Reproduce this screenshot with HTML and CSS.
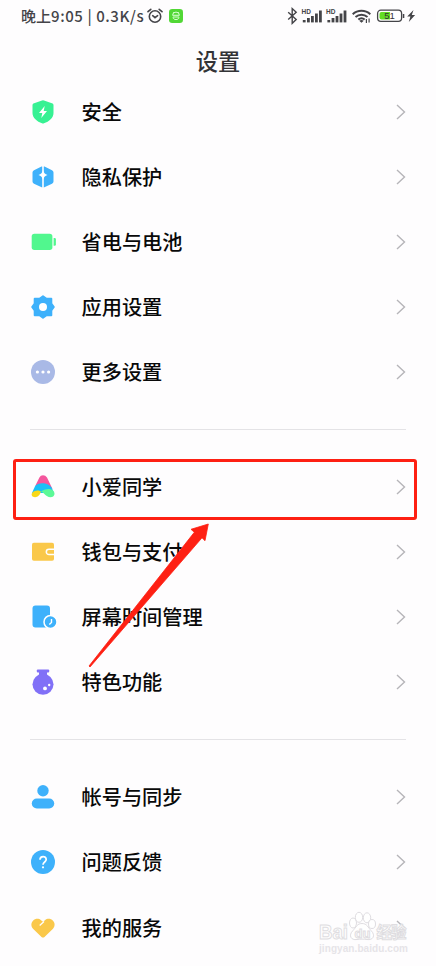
FILE: index.html
```html
<!DOCTYPE html>
<html lang="zh-CN">
<head>
<meta charset="utf-8">
<title>设置</title>
<link rel="stylesheet" href="styles.css">
</head>
<body>
<header class="status">
  <span class="clock">晚上<span class="latin">9:05 | 0.3K/s</span></span>
  <svg class="alarm" width="16" height="16" viewBox="0 0 16 16" fill="none" stroke="#444448" stroke-width="1.6" stroke-linecap="round"><circle cx="8" cy="8.5" r="5.7"/><path d="M1 3.7 3.8 1.3M15 3.7 12.2 1.3M5.7 7.7 8 9.7l2.6-2"/></svg>
  <svg class="app" width="14" height="14" viewBox="0 0 14 14"><rect width="14" height="14" rx="3.2" fill="#51d735"/><g fill="none" stroke="#d8ffd0" stroke-width="1"><path d="M3.6 6.3a3.4 3.2 0 0 1 6.8 0zM4 8h6M4 8.3c0 3 6 3 6 0M4.4 3l.8 1M9.6 3l-.8 1"/></g></svg>
  <svg class="radios" width="132" height="20" viewBox="0 0 132 20">
    <path d="M3 6.2l8 7.4-4 3.7V2.5l4 3.7-8 7.4" transform="translate(.2 0)" fill="none" stroke="#444448" stroke-width="1.4"/>
    <g id="signal" fill="#444448"><text class="hd" x="16.500" y="8">HD</text><rect x="17.800" y="14" width="2.800" height="2.400"/><rect x="22" y="12" width="2.800" height="4.400"/><rect x="26" y="10" width="2.800" height="6.400"/><rect x="30" y="7.500" width="2.800" height="8.900"/><rect x="34" y="4.500" width="2.800" height="11.900"/></g>
    <use href="#signal" x="24.600"/>
    <g fill="none" stroke="#444448" stroke-width="2"><path d="M67.700 8.200a13 13 0 0 1 17.600 0M70.500 11a9 9 0 0 1 12 0M73.300 13.600a5 5 0 0 1 6.400 0"/></g>
    <path d="M74.200 14.800l2.300 2 2.300-2a4 4 0 0 0-4.600 0zM80.800 13h1.200v4h-1.200zM83.500 12.500h1.200v4h-1.200z" fill="#444448"/>
    <rect x="92.600" y="4.200" width="24" height="11.200" rx="3.300" fill="#fff" stroke="#444448" stroke-width="1.300"/>
    <path d="M96.500 6H105v7.600h-8.500a2 2 0 0 1-2-2V8a2 2 0 0 1 2-2z" fill="#62dd23"/>
    <rect x="117.800" y="8" width="1.500" height="4" fill="#444448"/>
    <text class="charge" x="104.600" y="12.800">51</text>
    <path d="M128.500 4l-6.300 6.400h3.200l-1.600 5.600 6.300-7h-3.300z" fill="#444448"/>
  </svg>
</header>
<h1>设置</h1>
<main>
  <section>
    <a class="row"><svg class="icon" viewBox="-15 -15 30 30"><path d="M-1-11.600Q0-12 1-11.600L9.600-8.500Q10.500-8 10.500-7V1C10.500 6 6 9.500 1 11.300Q0 11.700-1 11.300C-6 9.500-10.500 6-10.500 1V-7Q-10.500-8-9.600-8.500z" fill="#37f193"/><path d="M1.700-6-4 1H-.7L-1.700 6 4-1H.7z" fill="#fff"/></svg><span>安全</span><svg class="chev" viewBox="0 0 10 16"><path d="M1 1l7.500 7L1 15"/></svg></a>
    <a class="row"><svg class="icon" viewBox="-15 -15 30 30"><path d="M-1.500-10.500-9-6.800Q-10.500-6-10.500-4.500V4.500Q-10.500 6-9 6.800L-.8 10.600V-10.600zM1.500-10.500 9-6.800Q10.500-6 10.500-4.500V4.500Q10.500 6 9 6.800L.8 10.600V-10.600z" fill="#3eb1fb"/><path d="M0-7Q.8-3 4.500-2 .8-1 0 3-.8-1-4.500-2-.8-3 0-7z" fill="#fff"/></svg><span>隐私保护</span><svg class="chev" viewBox="0 0 10 16"><path d="M1 1l7.500 7L1 15"/></svg></a>
    <a class="row"><svg class="icon" viewBox="-15 -15 30 30" fill="#51f78e"><rect x="-11.300" y="-8.200" width="20.700" height="16.200" rx="2.700"/><path d="M10.600-4h1a1.300 1.300 0 0 1 1.300 1.300v5.200a1.300 1.300 0 0 1-1.300 1.300h-1z"/></svg><span>省电与电池</span><svg class="chev" viewBox="0 0 10 16"><path d="M1 1l7.500 7L1 15"/></svg></a>
    <a class="row"><svg class="icon" viewBox="-15 -15 30 30"><path d="M0-10.800 3.500-8.300H8.300V-3.500L10.800 0 8.300 3.500V8.300H3.500L0 10.800-3.500 8.300H-8.300V3.500L-10.800 0-8.300-3.500V-8.300H-3.500z" fill="#3eb1fb" stroke="#3eb1fb" stroke-width="2" stroke-linejoin="round"/><circle r="4" fill="#fff"/></svg><span>应用设置</span><svg class="chev" viewBox="0 0 10 16"><path d="M1 1l7.500 7L1 15"/></svg></a>
    <a class="row"><svg class="icon" viewBox="-15 -15 30 30"><circle r="12" fill="#a9b9e6"/><g fill="#fff"><circle cx="-5.600" r="1.600"/><circle r="1.600"/><circle cx="5.600" r="1.600"/></g></svg><span>更多设置</span><svg class="chev" viewBox="0 0 10 16"><path d="M1 1l7.500 7L1 15"/></svg></a>
  </section>
  <hr>
  <section>
    <a class="row"><svg class="icon" viewBox="-15 -15 30 30"><path d="M-7.800-1-3.600-9.500Q-2.500-11.700 0-11.700T4-9.500L9.500 2Q0-4-7.800-1z" fill="#f4569d"/><path d="M-11 6-8-.8C-5-5.300 6-5 9 1.500L11 6-2 6z" fill="#18bff7"/><path d="M-11 6C-8 3-4 3-2 4.800C-3 7.500-5 10.200-8 10.200-11 10.200-12 8-11 6z" fill="#f8d817"/><path d="M-2.500 4.600C0 3 6 1 9 2.800 13 5.500 12 10.200 7.500 10.200 2.500 10.200 1 5-2.500 4.600z" fill="#5cf997"/></svg><span>小爱同学</span><svg class="chev" viewBox="0 0 10 16"><path d="M1 1l7.500 7L1 15"/></svg></a>
    <a class="row"><svg class="icon" viewBox="-15 -15 30 30"><rect x="-11" y="-9.200" width="22" height="18" rx="1.800" fill="#fac84a"/><path d="M11-2.800H6a2.700 2.700 0 0 0 0 5.400h5" fill="none" stroke="#fff" stroke-width="1.500"/></svg><span>钱包与支付</span><svg class="chev" viewBox="0 0 10 16"><path d="M1 1l7.500 7L1 15"/></svg></a>
    <a class="row"><svg class="icon" viewBox="-15 -15 30 30"><rect x="-10.500" y="-11.500" width="17.500" height="22" rx="3" fill="#3eb1fb"/><circle cx="7.500" cy="5" r="6.500" fill="#3eb1fb" stroke="#fff" stroke-width="1.500"/><path d="M8.500 2v3.500L6.300 7.500" fill="none" stroke="#fff" stroke-width="1.400"/></svg><span>屏幕时间管理</span><svg class="chev" viewBox="0 0 10 16"><path d="M1 1l7.500 7L1 15"/></svg></a>
    <a class="row"><svg class="icon" viewBox="-15 -15 30 30"><g fill="#8170f7"><rect x="-6.200" y="-12.500" width="12.400" height="3" rx="1"/><path d="M-4-10H4V-6H-4z"/><circle cy="2.300" r="10.500"/></g><circle cx="2" cy="6.400" r="1.900" fill="#fff"/><circle cx="6.200" cy="3" r="1.200" fill="#fff"/></svg><span>特色功能</span><svg class="chev" viewBox="0 0 10 16"><path d="M1 1l7.500 7L1 15"/></svg></a>
  </section>
  <hr>
  <section>
    <a class="row"><svg class="icon" viewBox="-15 -15 30 30" fill="#3eb1fb"><circle cy="-6.300" r="5.700"/><rect x="-11.200" y="1.500" width="22.400" height="10" rx="5"/></svg><span>帐号与同步</span><svg class="chev" viewBox="0 0 10 16"><path d="M1 1l7.500 7L1 15"/></svg></a>
    <a class="row"><svg class="icon" viewBox="-15 -15 30 30"><circle r="12" fill="#3eb1fb"/><path d="M-3-2.200C-3-6.500 3.200-6.500 3.200-2.500 3.200 0 0 0 0 2.800" fill="none" stroke="#fff" stroke-width="1.700"/><circle cy="5.300" r="1.100" fill="#fff"/></svg><span>问题反馈</span><svg class="chev" viewBox="0 0 10 16"><path d="M1 1l7.500 7L1 15"/></svg></a>
    <a class="row"><svg class="icon" viewBox="-15 -15 30 30"><path d="M-10-7.300C-7.500-9.800-4-9.500-2-7.800L0-6.200 2-7.800C4-9.500 7.500-9.800 10-7.300 12.300-5 12-1.500 10 .7L1.500 9Q0 10.200-1.500 9L-10 .7C-12-1.500-12.300-5-10-7.300z" fill="#fac84a"/><path d="M1-6.500-3.300-2.500" stroke="#fff" stroke-width="1.300"/></svg><span>我的服务</span><svg class="chev" viewBox="0 0 10 16"><path d="M1 1l7.500 7L1 15"/></svg></a>
  </section>
</main>
<div class="highlight"></div>
<svg class="arrow" viewBox="0 0 124 148"><path d="M121.300 3 118 19.700 115 16.800 3 146 2 145 107.300 11.300 104 8.300z" fill="#fe2013" stroke="#fe2013" stroke-width=".8"/></svg>
<svg class="mark" viewBox="0 0 104 56">
  <g fill="#fff" fill-opacity=".85" stroke="#dfdde1" stroke-width="1">
    <text class="brand" x="9" y="33.500" textLength="29" lengthAdjust="spacingAndGlyphs">Bai</text>
    <ellipse cx="43" cy="18" rx="3.500" ry="5"/><ellipse cx="49" cy="12.300" rx="3.700" ry="5"/><ellipse cx="57" cy="12.800" rx="3.700" ry="5"/><ellipse cx="62" cy="19" rx="3.500" ry="4.500"/>
    <path d="M52 18.500c5 0 6 4 9 7 5 5 2 10-4 9-3-.5-7-.5-10 0-6 1-9-4-4-9 3-3 4-7 9-7z"/>
    <text class="du" x="44.500" y="32.500">du</text>
    <text class="brand cn" x="66.500" y="33" textLength="30">经验</text>
  </g>
  <text class="url" x="9" y="46.500" textLength="89">jingyan.baidu.com</text>
</svg>
</body>
</html>
```
FILE: styles.css
```css
* { box-sizing: border-box; }
body {
  position: relative;
  margin: 0;
  width: 436px;
  height: 966px;
  overflow: hidden;
  background: #fefdfe;
  color: #090909;
  font-family: "Noto Sans CJK SC", sans-serif;
}
.status {
  display: flex;
  align-items: center;
  height: 32px;
  padding-left: 21px;
  color: #444448;
}
.clock { width: 125.500px; font-size: 15px; font-weight: 500; line-height: 20px; margin-top: -1px; white-space: nowrap; }
.latin { letter-spacing: .58px; }
.app { margin-left: 6.500px; }
.radios { margin-left: 102px; }
.hd { font: 700 6.500px "Liberation Sans", sans-serif; }
.charge { font: 400 9.500px "Liberation Sans", sans-serif; text-anchor: middle; fill: #333336; }
h1 {
  margin: 0;
  height: 47.400px;
  line-height: 57px;
  font-size: 22.200px;
  font-weight: 500;
  text-align: center;
  color: #333336;
}
.row {
  display: flex;
  align-items: center;
  height: 65.100px;
  padding: 0 30.500px 0 28px;
  font-size: 20.200px;
  font-weight: 500;
}
.row span { flex: 1; margin-left: 23.500px; line-height: 30px; }
.icon { width: 30px; height: 30px; }
.chev { width: 10px; height: 16px; fill: none; stroke: #b6b5b9; stroke-width: 1.400; }
hr { height: 1px; margin: 24.300px 30px 24.500px; border: 0; background: #e4e3e6; }
.highlight {
  position: absolute;
  left: 13px;
  top: 459px;
  width: 404px;
  height: 61px;
  border: 3px solid #fe2013;
  border-radius: 3px;
}
.arrow { position: absolute; left: 87px; top: 521px; width: 124px; height: 148px; }
.mark { position: absolute; left: 310px; top: 905px; width: 104px; height: 56px; }
.brand { font: 700 20px "Liberation Sans", sans-serif; }
.cn { font: 700 15.500px "Noto Sans CJK SC", sans-serif; }
.du { font: 700 13px "Liberation Sans", sans-serif; }
.url { font: 700 10px "Liberation Sans", sans-serif; fill: #e6e4e8; }
```
